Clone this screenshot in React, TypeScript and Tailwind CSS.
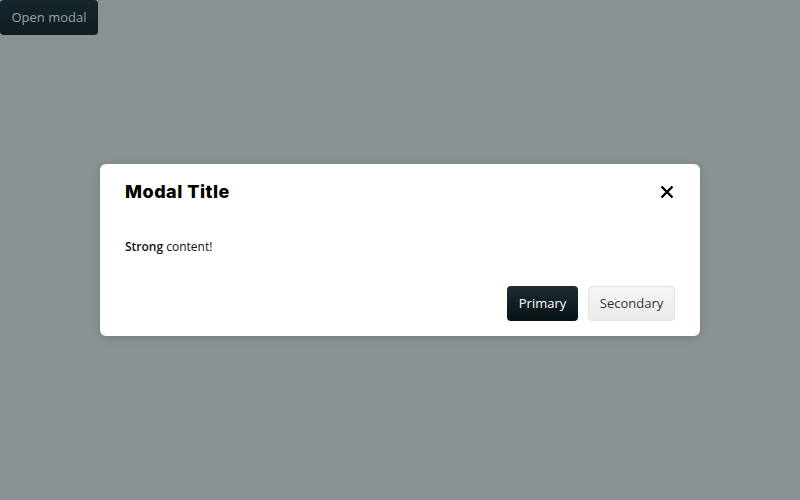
import React from "react";

export default function App() {
  return (
    <div className="relative w-[800px] h-[500px] bg-[#8a9193] overflow-hidden" style={{ fontFamily: '"Open Sans", sans-serif' }}>
      <button className="absolute left-0 top-0 w-[98px] h-[35px] rounded-[4px] bg-[linear-gradient(#15262c,#0e1d22)] text-[#98a2a5] text-[13px] leading-[35px]">
        Open modal
      </button>
      <div className="absolute left-[100px] top-[164px] w-[600px] h-[172px] bg-white rounded-[6px] shadow-[0_2px_8px_rgba(0,0,0,0.15)] px-[25px] pt-[13px] pb-[15px] flex flex-col">
        <div className="flex items-center justify-between h-[28px]">
          <h1 className="text-[18px] font-extrabold text-black tracking-[0.5px]" style={{ fontFamily: 'Inter, sans-serif' }}>
            Modal Title
          </h1>
          <svg width="14" height="14" viewBox="0 0 14 14" className="mr-[1px] mt-[2px]">
            <path d="M1.5 1.5L12.5 12.5M12.5 1.5L1.5 12.5" stroke="#000" strokeWidth="2.4" strokeLinecap="butt" />
          </svg>
        </div>
        <p className="mt-[32px] h-[20px] text-[12px] leading-[20px] text-[#111]">
          <strong className="font-semibold">Strong</strong> content!
        </p>
        <div className="mt-[29px] flex justify-end gap-[10px]">
          <button className="h-[35px] w-[71px] rounded-[4px] bg-[linear-gradient(#1c2c32,#071216)] text-white text-[13px]">
            Primary
          </button>
          <button className="h-[35px] w-[87px] rounded-[4px] border border-[#e2e2e2] bg-[linear-gradient(#f5f5f5,#ebebeb)] text-[#333] text-[13px]">
            Secondary
          </button>
        </div>
      </div>
    </div>
  );
}
